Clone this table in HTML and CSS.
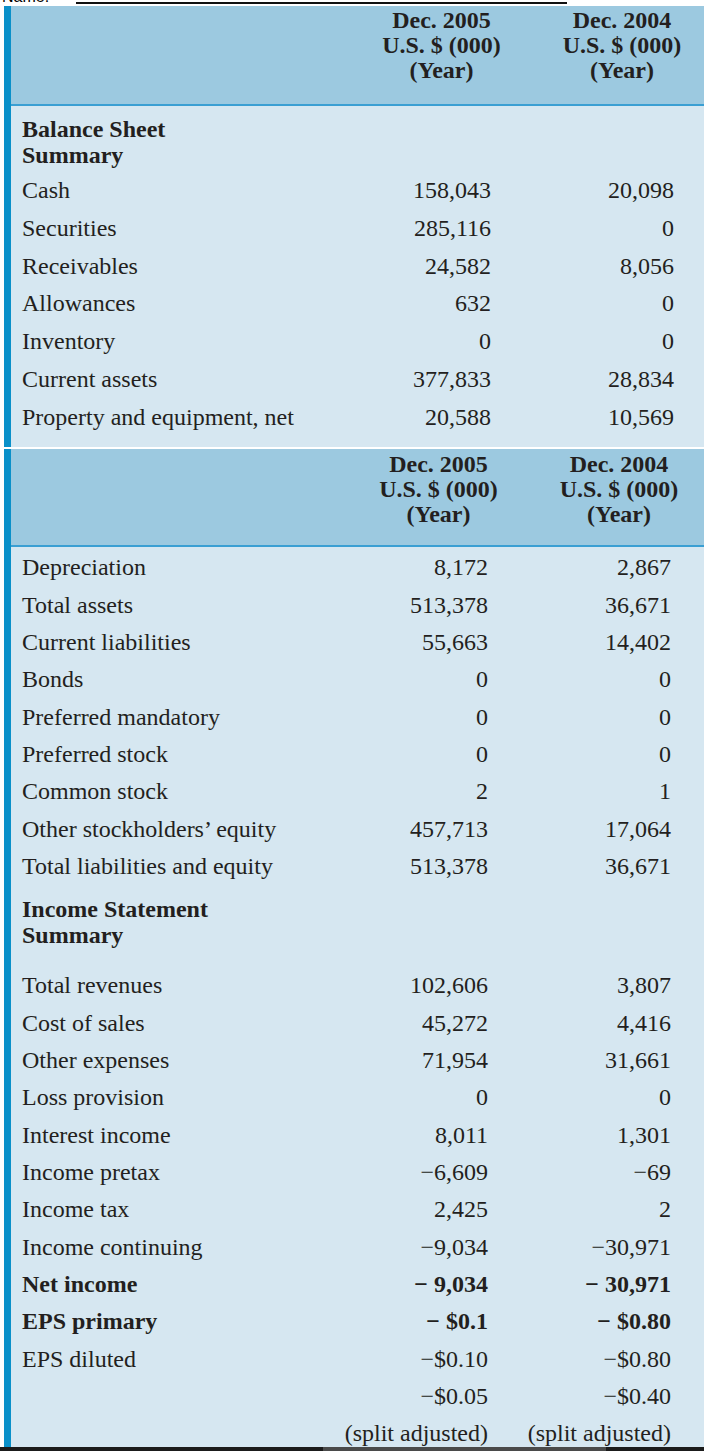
FILE: index.html
```html
<!DOCTYPE html>
<html lang="en">
<head>
<meta charset="utf-8">
<title>Financial Summary</title>
<link rel="stylesheet" href="styles.css">
</head>
<body>
<div class="namebar"><span class="name">Name:</span><span class="nameline"></span></div>

<section class="tbl tbl-a">
  <div class="thead">
    <div></div>
    <div class="hc">Dec. 2005<br>U.S. $ (000)<br>(Year)</div>
    <div class="hc">Dec. 2004<br>U.S. $ (000)<br>(Year)</div>
  </div>
  <div class="tbody">
    <div class="sec">Balance Sheet<br>Summary</div>
    <div class="row"><span class="lbl">Cash</span><span class="num">158,043</span><span class="num">20,098</span></div>
    <div class="row"><span class="lbl">Securities</span><span class="num">285,116</span><span class="num">0</span></div>
    <div class="row"><span class="lbl">Receivables</span><span class="num">24,582</span><span class="num">8,056</span></div>
    <div class="row"><span class="lbl">Allowances</span><span class="num">632</span><span class="num">0</span></div>
    <div class="row"><span class="lbl">Inventory</span><span class="num">0</span><span class="num">0</span></div>
    <div class="row"><span class="lbl">Current assets</span><span class="num">377,833</span><span class="num">28,834</span></div>
    <div class="row"><span class="lbl">Property and equipment, net</span><span class="num">20,588</span><span class="num">10,569</span></div>
  </div>
</section>

<section class="tbl tbl-b">
  <div class="thead">
    <div></div>
    <div class="hc">Dec. 2005<br>U.S. $ (000)<br>(Year)</div>
    <div class="hc">Dec. 2004<br>U.S. $ (000)<br>(Year)</div>
  </div>
  <div class="tbody">
    <div class="row"><span class="lbl">Depreciation</span><span class="num">8,172</span><span class="num">2,867</span></div>
    <div class="row"><span class="lbl">Total assets</span><span class="num">513,378</span><span class="num">36,671</span></div>
    <div class="row"><span class="lbl">Current liabilities</span><span class="num">55,663</span><span class="num">14,402</span></div>
    <div class="row"><span class="lbl">Bonds</span><span class="num">0</span><span class="num">0</span></div>
    <div class="row"><span class="lbl">Preferred mandatory</span><span class="num">0</span><span class="num">0</span></div>
    <div class="row"><span class="lbl">Preferred stock</span><span class="num">0</span><span class="num">0</span></div>
    <div class="row"><span class="lbl">Common stock</span><span class="num">2</span><span class="num">1</span></div>
    <div class="row"><span class="lbl">Other stockholders’ equity</span><span class="num">457,713</span><span class="num">17,064</span></div>
    <div class="row"><span class="lbl">Total liabilities and equity</span><span class="num">513,378</span><span class="num">36,671</span></div>
    <div class="sec sec-mid">Income Statement<br>Summary</div>
    <div class="row"><span class="lbl">Total revenues</span><span class="num">102,606</span><span class="num">3,807</span></div>
    <div class="row"><span class="lbl">Cost of sales</span><span class="num">45,272</span><span class="num">4,416</span></div>
    <div class="row"><span class="lbl">Other expenses</span><span class="num">71,954</span><span class="num">31,661</span></div>
    <div class="row"><span class="lbl">Loss provision</span><span class="num">0</span><span class="num">0</span></div>
    <div class="row"><span class="lbl">Interest income</span><span class="num">8,011</span><span class="num">1,301</span></div>
    <div class="row"><span class="lbl">Income pretax</span><span class="num">−6,609</span><span class="num">−69</span></div>
    <div class="row"><span class="lbl">Income tax</span><span class="num">2,425</span><span class="num">2</span></div>
    <div class="row"><span class="lbl">Income continuing</span><span class="num">−9,034</span><span class="num">−30,971</span></div>
    <div class="row bold"><span class="lbl">Net income</span><span class="num">− 9,034</span><span class="num">− 30,971</span></div>
    <div class="row bold"><span class="lbl">EPS primary</span><span class="num">− $0.1</span><span class="num">− $0.80</span></div>
    <div class="row"><span class="lbl">EPS diluted</span><span class="num">−$0.10</span><span class="num">−$0.80</span></div>
    <div class="row"><span class="lbl"></span><span class="num">−$0.05</span><span class="num">−$0.40</span></div>
    <div class="row last"><span class="lbl"></span><span class="num">(split adjusted)</span><span class="num">(split adjusted)</span></div>
  </div>
</section>
<div class="bottomline"></div>
</body>
</html>
```

FILE: styles.css
```css
html, body {
  margin: 0;
  padding: 0;
}
body {
  width: 704px;
  height: 1451px;
  overflow: hidden;
  background: #ffffff;
  font-family: "Liberation Serif", "Times New Roman", serif;
  font-size: 24px;
  color: #231f20;
}

/* top name line, mostly cut off */
.namebar {
  height: 6px;
  overflow: hidden;
  display: flex;
  align-items: flex-end;
  padding-left: 2px;
}
.name {
  font: 16px/16px "Liberation Sans", Arial, sans-serif;
  color: #000;
  margin-bottom: 1.5px;
}
.nameline {
  width: 491px;
  height: 0;
  border-bottom: 2px solid #111;
  margin: 0 0 2px 27px;
}

/* tables */
.tbl {
  margin-left: 4px;
  border-left: 7px solid #0a90c9;
}
.tbl-b {
  margin-top: 2px;
}

.thead {
  box-sizing: border-box;
  background: #9cc9e0;
  border-bottom: 2px solid #3a9fd3;
  display: grid;
  grid-template-columns: 1fr 99px 99px;
  column-gap: 81.5px;
  font-weight: bold;
  line-height: 25px;
  text-align: center;
}
.tbl-a .thead {
  height: 100px;
  padding: 1.5px 32.5px 0 0;
}
.tbl-b .thead {
  height: 98px;
  padding: 3.5px 35.5px 0 0;
}
.hc {
  white-space: nowrap;
  justify-self: center;
}

.tbody {
  background: #d6e7f1;
  padding-left: 11px;
}
.tbl-a .tbody {
  padding-top: 10px;
  padding-bottom: 10.4px;
}
.tbl-b .tbody {
  padding-top: 2.3px;
}

.sec {
  font-weight: bold;
  line-height: 26px;
  margin-bottom: 4px;
}
.sec-mid {
  margin-top: 10.5px;
  margin-bottom: 19.3px;
}

.row {
  display: grid;
  grid-template-columns: 1fr 99px 99px;
  column-gap: 84px;
  height: 37.8px;
  line-height: 37.8px;
  padding-right: 30px;
}
.tbl-b .row {
  height: 37.35px;
  line-height: 37.35px;
  padding-right: 33px;
}
.tbl-b .row.last {
  height: 31.5px;
}
.row.bold {
  font-weight: bold;
}
.lbl {
  white-space: nowrap;
}
.num {
  white-space: nowrap;
  text-align: right;
  justify-self: end;
}

.bottomline {
  height: 4px;
  background: linear-gradient(to right, #1b1b1b 0, #1b1b1b 323px, #4a4a4a 323px, #4a4a4a 606px, #1b1b1b 606px);
}
```
